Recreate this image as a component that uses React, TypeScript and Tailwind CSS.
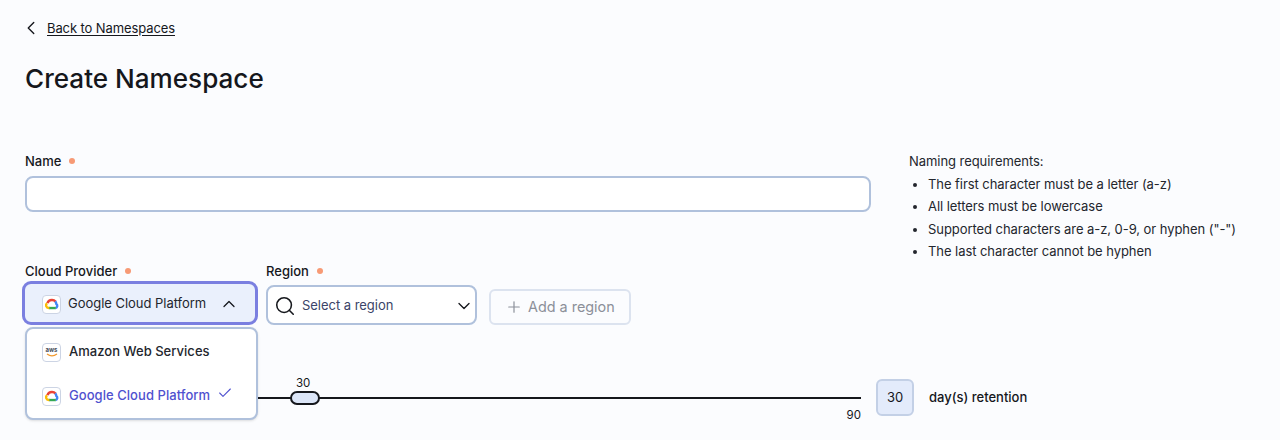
import React from "react";
import { ChevronLeft, ChevronDown, ChevronUp, Search, Plus, Check } from "lucide-react";

function Dot() {
  return <span className="ml-[8px] inline-block h-[6px] w-[6px] rounded-full bg-[#f79a75]" />;
}

function Label({ children }: { children: React.ReactNode }) {
  return (
    <div className="flex h-[20px] items-center text-[13px] font-medium leading-[20px] text-[#15171c]">
      {children}
      <Dot />
    </div>
  );
}

function GcpLogo() {
  return (
    <span className="flex h-[19px] w-[19px] shrink-0 items-center justify-center rounded-[4px] border border-[#ccd4e4] bg-white">
      <svg width="14" height="12" viewBox="0 0 26 21" fill="none">
        <path d="M9 18H7a5 5 0 0 1-3-9" stroke="#FBBC05" strokeWidth="4.4" />
        <path d="M4.6 9A8.6 8.6 0 0 1 13 3a8.5 8.5 0 0 1 6.6 3" stroke="#EA4335" strokeWidth="4.4" />
        <path d="M19 5.6A8.4 8.4 0 0 1 21 10.4a4.2 4.2 0 0 1-1.5 7.6" stroke="#4285F4" strokeWidth="4.4" />
        <path d="M8 18h12" stroke="#34A853" strokeWidth="4.4" />
      </svg>
    </span>
  );
}

function AwsLogo() {
  return (
    <span className="flex h-[19px] w-[19px] shrink-0 flex-col items-center justify-center rounded-[4px] border border-[#ccd4e4] bg-white">
      <span className="text-[6px] font-bold leading-[6px] text-[#4a4f5c]">aws</span>
      <svg width="12" height="4" viewBox="0 0 12 4" fill="none">
        <path d="M1 1c3 2.2 7 2.2 10 0" stroke="#f29a2e" strokeWidth="1.2" />
      </svg>
    </span>
  );
}

export default function App() {
  return (
    <div className="relative h-[440px] w-[1280px] overflow-hidden bg-[#fbfcfe] px-[25px] pt-[18px] font-['Inter',sans-serif] text-[#15171c] antialiased">
      <div className="flex h-[20px] items-center">
        <ChevronLeft size={22} strokeWidth={1.5} className="-ml-[5px] text-[#15171c]" />
        <a className="ml-[5px] text-[13px] leading-[20px] tracking-[-0.1px] underline underline-offset-[2px]">Back to Namespaces</a>
      </div>
      <h1 className="mt-[22px] text-[26.1px] font-medium leading-[38px] text-[#15171c]">Create Namespace</h1>

      <div className="mt-[53px] flex">
        <div className="w-[846px] shrink-0">
          <Label>Name</Label>
          <div className="mt-[5px] h-[36px] rounded-[8px] border-2 border-[#b0c1dc] bg-white" />

          <div className="mt-[49px] flex">
            <div className="w-[241px] shrink-0">
              <Label>Cloud Provider</Label>
              <div className="relative -ml-[3px] h-[44px] w-[236px]">
                <div className="flex h-full items-center rounded-[9px] border-[3px] border-[#7a7fe0] bg-[#eaf0fc] pl-[17px] pr-[16px] pt-[2px]">
                  <GcpLogo />
                  <span className="ml-[7px] text-[13px] tracking-[-0.03px] text-[#23262d]">Google Cloud Platform</span>
                  <ChevronUp size={20} strokeWidth={1.5} className="ml-auto" />
                </div>
              </div>
            </div>
            <div className="w-[223px] shrink-0">
              <Label>Region</Label>
              <div className="mt-[4px] flex h-[40px] w-[211px] items-center rounded-[8px] border-2 border-[#b0c1dc] bg-white pl-[6px] pr-[1px] pt-[2px]">
                <Search size={22} strokeWidth={1.7} className="text-[#15171c]" />
                <span className="ml-[6px] text-[13px] tracking-[-0.03px] text-[#3b4468]">Select a region</span>
                <ChevronDown size={20} strokeWidth={1.6} className="ml-auto" />
              </div>
            </div>
            <div className="mt-[28px] flex h-[36px] w-[142px] items-center rounded-[6px] border-2 border-[#dce3ef] pl-[14px] text-[14.4px] text-[#8c9099]">
              <Plus size={18} strokeWidth={1.6} />
              <span className="ml-[5px]">Add a region</span>
            </div>
          </div>
        </div>

        <div className="ml-[38px] -mt-[1px] text-[13px] leading-[22.6px] tracking-[-0.06px] text-[#23262d]">
          <p>Naming requirements:</p>
          <ul className="ml-[19px] list-disc">
            <li>The first character must be a letter (a-z)</li>
            <li>All letters must be lowercase</li>
            <li>Supported characters are a-z, 0-9, or hyphen ("-")</li>
            <li>The last character cannot be hyphen</li>
          </ul>
        </div>
      </div>

      <div className="mt-[54px] flex h-[37px] items-center">
        <div className="relative h-[37px] w-[836px]">
          <div className="absolute left-0 right-0 top-[18px] h-[2px] bg-[#15171c]" />
          <div className="absolute left-[265px] top-[12px] h-[14px] w-[30px] rounded-[7px] border-2 border-[#15171c] bg-[#dbe5f7]" />
          <span className="absolute left-[271px] top-[-3px] text-[11.5px] leading-[14px]">30</span>
          <span className="absolute right-0 top-[29px] text-[11.5px] leading-[14px]">90</span>
        </div>
        <div className="ml-[15px] flex h-[37px] w-[38px] items-center justify-center rounded-[6px] border-2 border-[#c3d0e6] bg-[#e3ebfb] pt-[1px] text-[13px]">
          30
        </div>
        <span className="ml-[15px] pt-[1px] text-[13px] font-medium">day(s) retention</span>
      </div>

      <div className="absolute left-[25px] top-[327px] h-[93px] w-[233px] rounded-[8px] border-2 border-[#b0c1dc] bg-white shadow-sm">
        <div className="flex h-[46px] items-center pl-[15px]">
          <AwsLogo />
          <span className="ml-[8px] text-[13px] font-medium tracking-[0.03px] text-[#23262d]">Amazon Web Services</span>
        </div>
        <div className="flex h-[42px] items-center pl-[15px]">
          <GcpLogo />
          <span className="ml-[8px] text-[13px] font-medium tracking-[0.05px] text-[#4f51cf]">Google Cloud Platform</span>
          <Check size={16} strokeWidth={1.6} className="-mt-[6px] ml-[7px] text-[#4f51cf]" />
        </div>
      </div>
    </div>
  );
}
